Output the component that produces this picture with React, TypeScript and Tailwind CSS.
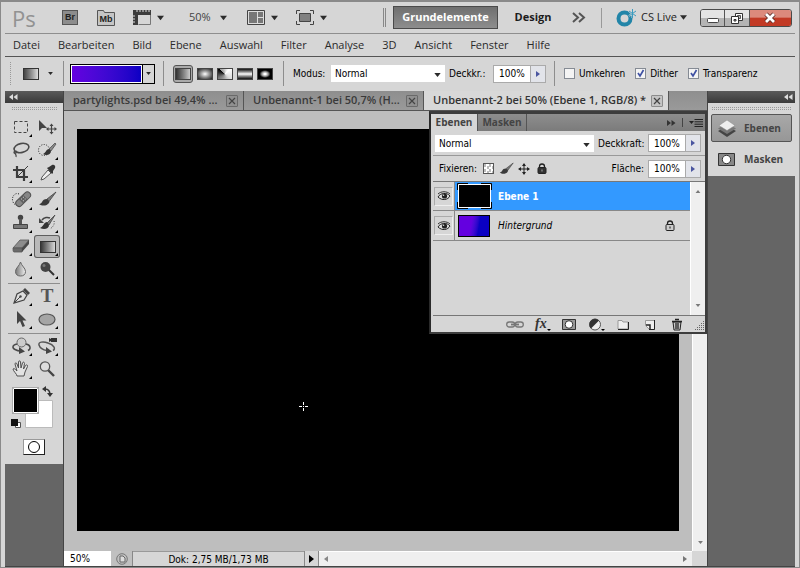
import type { ReactNode } from 'react'
import clsx from 'clsx'

const MENU = ['Datei', 'Bearbeiten', 'Bild', 'Ebene', 'Auswahl', 'Filter', 'Analyse', '3D', 'Ansicht', 'Fenster', 'Hilfe']

const DOCS = [
  { title: 'partylights.psd bei 49,4% ...', width: 'w-[180px]', active: false },
  { title: 'Unbenannt-1 bei 50,7% (H...', width: 'w-[180px]', active: false },
  { title: 'Unbenannt-2 bei 50% (Ebene 1, RGB/8) *', width: 'w-[245px]', active: true },
]

const UI_FONT = "font-['DejaVu_Sans_Condensed','DejaVu_Sans',sans-serif]"

/* ---------- small parts ---------- */

function Down({ className }: { className?: string }) {
  return (
    <svg viewBox="0 0 8 5" className={clsx('shrink-0', className ?? 'h-[5px] w-2')}>
      <path d="M0 0h8L4 5z" fill="#2b2b2b" />
    </svg>
  )
}

function Grip({ className }: { className?: string }) {
  return <div className={clsx('bg-[conic-gradient(#999_25%,transparent_0)] bg-[length:2px_2px]', className)} />
}

function Divider() {
  return <div className="h-[25px] w-px shrink-0 bg-[#8d8d8d]" />
}

function CloseBox({ active }: { active: boolean }) {
  return (
    <button
      type="button"
      aria-label="Schließen"
      className={clsx(
        'flex size-3 shrink-0 items-center justify-center rounded-[1px] border',
        active ? 'border-[#8c8c8c] bg-[#c4c4c4]' : 'border-[#6a6a6a] bg-[#909090]',
      )}
    >
      <svg viewBox="0 0 8 8" className="size-2">
        <path d="M1 1l6 6M7 1l-6 6" stroke="#444" strokeWidth="1.2" />
      </svg>
    </button>
  )
}

function Select({ id, label, value, className }: { id: string; label?: string; value: string; className: string }) {
  return (
    <div className={clsx('relative', className)}>
      <select
        id={id}
        aria-label={label}
        className="block h-[17px] w-full appearance-none bg-white pl-1 text-[10px] text-black outline-none"
      >
        <option>{value}</option>
      </select>
      <Down className="pointer-events-none absolute top-2 right-1 h-1 w-[7px]" />
    </div>
  )
}

function Percent({ id }: { id: string }) {
  return (
    <div className="flex h-[18px] shrink-0 border border-[#aaa] bg-white">
      <input id={id} defaultValue="100%" className="w-9 pl-[5px] text-[10px] text-black outline-none" />
      <button
        type="button"
        aria-label="Regler"
        className="flex w-[15px] items-center justify-center border-l border-[#aaa] bg-[#e2e4ea]"
      >
        <svg viewBox="0 0 4 6" className="h-1.5 w-1">
          <path d="M0 0l4 3-4 3z" fill="#4a56a0" />
        </svg>
      </button>
    </div>
  )
}

function Check({ id, label, checked }: { id: string; label: string; checked?: boolean }) {
  return (
    <div className="flex items-center gap-1">
      <div className="relative size-[11px]">
        <input
          id={id}
          type="checkbox"
          defaultChecked={checked}
          className="peer block size-[11px] appearance-none border border-[#858b94] bg-[#f4f4f4]"
        />
        <svg viewBox="0 0 11 11" className="pointer-events-none absolute inset-0 hidden size-[11px] peer-checked:block">
          <path d="M3 5l2 3 3.500-6" fill="none" stroke="#3f51a3" strokeWidth="1.700" />
        </svg>
      </div>
      <label htmlFor={id}>{label}</label>
    </div>
  )
}

/* ---------- tool icons, drawn on a 26 x 23 cell ---------- */

const BRUSH = (
  <>
    <path d="M22 3l-9 7 2 2.500z" fill="#777" stroke="#444" strokeWidth=".8" />
    <path d="M13 10c-3 0-4 1-5 3-.8 1.500-2 2-3 2 3 2.500 8 2 10-1 .5-1 .5-1.500 0-2z" fill="#3a3a3a" />
  </>
)

const TOOLS: { name: string; icon: ReactNode; flat?: boolean }[][] = [
  [
    { name: 'Auswahlrechteck', icon: <rect x="6.500" y="5.500" width="13" height="11" fill="none" stroke="#444" strokeDasharray="3 2" /> },
    {
      name: 'Verschieben',
      flat: true,
      icon: (
        <>
          <path d="M5 4v11l3-3h5z" fill="#444" />
          <path d="M17.500 9v8M13.500 13h8" stroke="#444" strokeWidth="1.200" />
          <path d="M17.500 7.500l2 2.500h-4zM17.500 18.500l2-2.500h-4zM12 13l2.500-2v4zM23 13l-2.500-2v4z" fill="#444" />
        </>
      ),
    },
    {
      name: 'Lasso',
      icon: (
        <g fill="none" stroke="#4a4a4a" strokeWidth="1.600">
          <ellipse cx="13.500" cy="9" rx="7.500" ry="4.500" transform="rotate(-12 13.500 9)" />
          <path d="M7 12c-2 1-1 3 1 2s0-3-1-1 2 2 1 5" strokeWidth="1.200" />
        </g>
      ),
    },
    {
      name: 'Schnellauswahl',
      icon: (
        <>
          <circle cx="10" cy="11" r="5.500" fill="none" stroke="#222" strokeDasharray="1 1.500" />
          <path d="M21 4l-6 6 2 2 5-7z" fill="#888" stroke="#444" strokeWidth=".7" />
          <path d="M15 10c-3 0-3 4-6 5 3 2 8 1 8-3z" fill="#333" />
        </>
      ),
    },
    {
      name: 'Freistellen',
      icon: (
        <>
          <path d="M9 4v11h11M5 8h11v11" fill="none" stroke="#3c3c3c" strokeWidth="2.200" />
          <path d="M10 14l10-10" stroke="#3c3c3c" />
        </>
      ),
    },
    {
      name: 'Pipette',
      icon: (
        <>
          <path d="M14 8l3 3-7 6-3 1 1-3z" fill="#eee" stroke="#555" />
          <path d="M13 6l2-1 3-2c2-1 4 1 3 3l-2 3v2l-1 1z" fill="#333" />
        </>
      ),
    },
  ],
  [
    {
      name: 'Bereichsreparatur',
      icon: (
        <>
          <path d="M11 5c-4-2-8 3-6 8 1 2 2 3 4 3" fill="none" stroke="#222" strokeDasharray="1 1.500" />
          <g transform="rotate(-44 15 10)">
            <rect x="6" y="7" width="18" height="6.500" rx="3.200" fill="#858585" stroke="#505050" />
            <path d="M12 7v6.500h6V7z" fill="#5d5d5d" />
            <path d="M13.500 9h1M16 9h1M13.500 11.500h1M16 11.500h1" stroke="#ccc" />
          </g>
        </>
      ),
    },
    { name: 'Pinsel', icon: BRUSH },
    {
      name: 'Kopierstempel',
      icon: (
        <>
          <circle cx="12.500" cy="5.500" r="2.700" fill="#444" />
          <path d="M11 7h3v6h-3z" fill="#555" />
          <path d="M5.500 12.500h14v4h-14z" fill="#777" stroke="#444" />
        </>
      ),
    },
    {
      name: 'Protokollpinsel',
      icon: (
        <>
          <path d="M21 3l-8 8 2 2z" fill="#777" stroke="#444" strokeWidth=".8" />
          <path d="M13 10c-3 0-3 4-7 6 4 2 9 1 9-3z" fill="#333" />
          <path d="M8 8c2-3 6-3 8-2" fill="none" stroke="#444" strokeWidth="1.500" />
          <path d="M5 6v5h5z" fill="#444" />
          <path d="M20 9c1 3-1 6-4 8" fill="none" stroke="#444" strokeDasharray="1 1.500" />
        </>
      ),
    },
    {
      name: 'Radiergummi',
      icon: (
        <>
          <path d="M5 13l7-8h9l-7 8z" fill="#8c8c8c" stroke="#555" strokeWidth=".8" />
          <path d="M5 13h9v4H6c-1 0-1-2-1-4z" fill="#6a6a6a" stroke="#555" strokeWidth=".8" />
          <path d="M14 13l7-8v4l-7 8z" fill="#484848" />
        </>
      ),
    },
    { name: 'Verlauf', icon: <rect x="6.500" y="6.500" width="15" height="11" fill="url(#toolGradient)" stroke="#333" /> },
    {
      name: 'Weichzeichner',
      icon: <path d="M12.500 4c1 4 5 6 5 9.500 0 3-2 4.500-5 4.500s-5-1.500-5-4.500c0-3.500 4-5.500 5-9.500z" fill="url(#dropGradient)" stroke="#666" />,
    },
    {
      name: 'Abwedler',
      icon: (
        <>
          <path d="M14 11l6 6" stroke="#333" strokeWidth="2" />
          <circle cx="11.500" cy="9" r="5" fill="#444" />
          <circle cx="10" cy="7.500" r="1.500" fill="#777" />
        </>
      ),
    },
  ],
  [
    {
      name: 'Zeichenstift',
      icon: (
        <>
          <path d="M6 18l3-9 6-3 4 4-3 5z" fill="#ddd" stroke="#444" strokeWidth="1.200" />
          <path d="M15 5l2-2 5 5-2 2z" fill="#444" />
          <path d="M6 18l6-6" stroke="#444" />
          <circle cx="12.500" cy="11.500" r="1.200" fill="#444" />
        </>
      ),
    },
    {
      name: 'Text',
      icon: (
        <text x="13" y="17" textAnchor="middle" fontSize="19" fontWeight="700" fontFamily="Liberation Serif, serif" fill="#555">
          T
        </text>
      ),
    },
    { name: 'Pfadauswahl', icon: <path d="M9 3v13l3-3 2.500 6 2.500-1-2.500-5.500h4z" fill="#444" /> },
    { name: 'Ellipse', icon: <ellipse cx="13" cy="11.500" rx="8" ry="5.500" fill="#a5a5a5" stroke="#555" strokeWidth="1.200" /> },
  ],
  [
    {
      name: '3D drehen',
      icon: (
        <>
          <path d="M9 9c-5 1-5 4-2 5.500s4 1.500 5 1.500M18 9c5 1 5 5 2 6.500" fill="none" stroke="#4a4a4a" strokeWidth="1.500" />
          <path d="M11 12l6 4.500-6 2.500z" fill="#444" />
          <circle cx="13.500" cy="7.500" r="4.500" fill="#ccc" stroke="#666" />
        </>
      ),
    },
    {
      name: '3D-Kamera',
      icon: (
        <>
          <path d="M14 8c-5-2-10-1-9 2s4 5 8 5.500M14 8c6 2 8 6 5 7.500" fill="none" stroke="#555" strokeWidth="1.500" />
          <path d="M12 12l6 4.500-6 2.500z" fill="#444" />
          <path d="M15 3l2 1v-1h6v4h-6v-1l-2 1z" fill="#333" />
        </>
      ),
    },
    {
      name: 'Hand',
      icon: (
        <path
          d="M9 18c0-2-4-5-4-7 1-1 2 0 4 2L7 6c0-1.500 1.500-1.500 2 0l1.500 4V4c0-1.500 2-1.500 2 0l.5 6 1.500-5c.5-1.500 2-1 2 .5l-1 5.500 2-3.500c1-1.200 2.500-.5 2 1L17 14l-1 4z"
          fill="#e2e2e2"
          stroke="#505050"
          strokeLinejoin="round"
        />
      ),
    },
    {
      name: 'Zoom',
      flat: true,
      icon: (
        <>
          <path d="M14 12l6 6" stroke="#444" strokeWidth="2.400" />
          <circle cx="11" cy="8.500" r="4.700" fill="#ddd" stroke="#555" strokeWidth="1.300" />
        </>
      ),
    },
  ],
]

function Toolbar() {
  return (
    <aside className="flex w-[58px] shrink-0 flex-col bg-[#656565]">
      <div className="h-3 bg-linear-to-b from-[#5a5a5a] to-[#3a3a3a] px-1 pt-[3px]">
        <DoubleArrow flip />
      </div>
      <div className="bg-[#d6d6d6] pb-[9px]">
        <Grip className="mx-1.5 mt-1 mb-[5px] h-[3px]" />
        <svg className="block h-0 w-0">
          <defs>
            <linearGradient id="toolGradient">
              <stop stopColor="#333" />
              <stop offset="1" stopColor="#ddd" />
            </linearGradient>
            <linearGradient id="dropGradient">
              <stop stopColor="#777" />
              <stop offset="1" stopColor="#f0f0f0" />
            </linearGradient>
          </defs>
        </svg>
        {TOOLS.map((group, i) => (
          <div key={i} className={clsx('mx-[3px] grid grid-cols-2 py-px', i > 0 && 'mt-px border-t border-[#8e8e8e]')}>
            {group.map((tool) => (
              <button
                key={tool.name}
                type="button"
                aria-label={tool.name}
                className={clsx('h-[23px]', tool.name === 'Verlauf' && 'rounded-[3px] bg-[#b9b9b9] ring-1 ring-[#5e5e5e] ring-inset')}
              >
                <svg viewBox="0 0 26 23" className="h-[23px] w-[26px]">
                  {tool.icon}
                  {!tool.flat && <path d="M24 18v3h-3z" fill="#000" />}
                </svg>
              </button>
            ))}
          </div>
        ))}
        <div className="px-1.5 pt-1">
          <svg viewBox="0 0 46 44" className="h-11 w-[46px]">
            <path d="M14.500 14.500h27v27h-27z" fill="#fff" stroke="#bbb" />
            <path d="M1.500 1.500h26v26h-26z" fill="#000" stroke="#aaa" />
            <path d="M2.500 2.500h24v24h-24z" fill="#000" stroke="#fff" />
            <path d="M4.500 36.500h5v5h-5z" fill="#fff" stroke="#555" />
            <path d="M0 33h7v7H0z" fill="#111" />
            <path d="M34 3c4 0 5 2 5 6" fill="none" stroke="#333" strokeWidth="1.500" />
            <path d="M31 3l4-3v6zM36 7h6l-3 4z" fill="#333" />
          </svg>
        </div>
        <button
          type="button"
          aria-label="Maskierungsmodus"
          className="mx-auto mt-[9px] flex h-4 w-[22px] items-center justify-center border border-t-[#999] border-r-[#222] border-b-[#222] border-l-[#999] bg-white"
        >
          <span className="size-3 rounded-full border border-black" />
        </button>
      </div>
    </aside>
  )
}

function DoubleArrow({ flip, dark }: { flip?: boolean; dark?: boolean }) {
  return (
    <svg viewBox="0 0 9 6" className="block h-1.5 w-[9px]">
      <path d={flip ? 'M4 0v6L0 3zM8.500 0v6l-4-3z' : 'M0 0l4 3-4 3zM4.500 0l4 3-4 3z'} fill={dark ? '#333' : '#ddd'} />
    </svg>
  )
}

/* ---------- top bars ---------- */

function AppBar() {
  return (
    <header className="flex h-8 items-center border-b border-[#8e8e8e] pr-[3px] pl-[7px]">
      <span className="w-[50px] font-['Open_Sans',sans-serif] text-[22px] leading-none text-[#929292]">Ps</span>
      <div className="flex flex-1 items-center text-[#444]">
        <button type="button" className="h-[15px] w-4 border border-[#555] bg-[#8c8c8c] font-['Liberation_Sans',sans-serif] text-[9px] leading-none font-bold text-[#222]">
          Br
        </button>
        <button type="button" aria-label="Mb" className="ml-[19px]">
          <svg viewBox="0 0 18 16" className="block h-4 w-[18px]">
            <path d="M.5.500h6l1 2h10v13H.5z" fill="#c5c5c5" stroke="#555" />
            <text x="9" y="12" textAnchor="middle" fontSize="9" fontWeight="700" fontFamily="Liberation Sans, sans-serif" fill="#222">
              Mb
            </text>
          </svg>
        </button>
        <button type="button" aria-label="Extras" className="ml-[18px] flex items-center gap-1.5">
          <svg viewBox="0 0 18 15" className="h-[15px] w-[18px]">
            <path d="M0 0h18v5H5v10H0z" fill="#3c3c3c" />
            <path d="M4 0v2M7 0v2M10 0v2M13 0v2M16 0v2M0 6h2M0 9h2M0 12h2" stroke="#ddd" />
            <path d="M5.500 14.500h12V5" fill="none" stroke="#777" />
          </svg>
          <Down className="h-1.5 w-[7px]" />
        </button>
        <button type="button" className="ml-[25px] flex items-center gap-[9px] font-['Open_Sans',sans-serif] text-[11px]">
          50%
          <Down className="h-1.5 w-[7px]" />
        </button>
        <button type="button" aria-label="Dokumente anordnen" className="ml-5 flex items-center gap-1.5">
          <svg viewBox="0 0 18 15" className="h-[15px] w-[18px]">
            <path d="M.5.500h17v14H.5z" fill="#ddd" stroke="#444" />
            <path d="M2 2h8v11H2zM11 2h5v5h-5zM11 8h5v5h-5z" fill="#777" />
          </svg>
          <Down className="h-1.5 w-[7px]" />
        </button>
        <button type="button" aria-label="Bildschirmmodus" className="ml-[18px] flex items-center gap-1.5">
          <svg viewBox="0 0 18 15" className="h-[15px] w-[18px]">
            <path d="M.5 4V.5H4M14 .5h3.500V4M17.500 11v3.500H14M4 14.500H.5V11" fill="none" stroke="#444" />
            <path d="M3.500 3.500h11v8h-11z" fill="#808080" stroke="#444" />
          </svg>
          <Down className="h-1.5 w-[7px]" />
        </button>
      </div>
      <div className="flex items-center font-['Open_Sans',sans-serif] text-[11px] text-[#1c1c1c]">
        <div className="h-[19px] w-[3px] border-x border-[#888]" />
        <button type="button" className="ml-[7px] h-[23px] w-[105px] border border-[#4a4a4a] bg-linear-to-b from-[#6f6f6f] to-[#8e8e8e] font-bold text-white">
          Grundelemente
        </button>
        <button type="button" className="ml-4 w-[38px] font-bold">
          Design
        </button>
        <button type="button" aria-label="Mehr" className="ml-5">
          <svg viewBox="0 0 14 11" className="block h-[11px] w-[14px]">
            <path d="M1 1l5 4.500L1 10M7 1l5 4.500L7 10" fill="none" stroke="#555" strokeWidth="2" />
          </svg>
        </button>
        <div className="ml-[15px] h-5 w-px bg-[#999]" />
        <button type="button" className="ml-3.5 flex items-center">
          <svg viewBox="0 0 21 18" className="mr-1 h-[18px] w-[21px]">
            <circle cx="8.500" cy="9.500" r="6" fill="none" stroke="#2285a8" strokeWidth="4" />
            <path d="M16.500 0v9M13 2l7 5M20 2l-7 5" stroke="#d6d6d6" strokeWidth="2" />
            <path d="M16.500 0v9M13 2l7 5M20 2l-7 5" stroke="#3c9cc0" />
          </svg>
          CS Live
          <Down className="ml-[3px] h-[5px] w-[7px]" />
        </button>
        <div className="ml-[13px] flex h-[18px] overflow-hidden rounded-[3px] border border-[#4a4a4a]">
          <button type="button" aria-label="Minimieren" className="w-6 border-r border-[#555] bg-linear-to-b from-[#e4e4e4] from-50% to-[#b4b4b4] to-50%">
            <svg viewBox="0 0 24 16" className="h-4 w-6">
              <rect x="6.500" y="8.500" width="11" height="4" rx="1" fill="#fff" stroke="#444" />
            </svg>
          </button>
          <button type="button" aria-label="Verkleinern" className="w-[25px] border-r border-[#555] bg-linear-to-b from-[#e4e4e4] from-50% to-[#b4b4b4] to-50%">
            <svg viewBox="0 0 24 16" className="h-4 w-6">
              <path d="M10.500 3.500h7v7h-7z" fill="#fff" stroke="#333" />
              <path d="M12.500 5.500h3v3h-3z" fill="#bbb" stroke="#333" strokeWidth=".8" />
              <path d="M6.500 6.500h7v7h-7z" fill="#fff" stroke="#333" />
              <path d="M9 9.500h2v1.500H9z" fill="#bbb" stroke="#333" />
            </svg>
          </button>
          <button type="button" aria-label="Schließen" className="w-[41px] bg-linear-to-b from-[#dc8a7c] from-45% to-[#c23a25] to-50%">
            <svg viewBox="0 0 41 16" className="h-4 w-[41px]">
              <path d="M16 4l8 8M24 4l-8 8" stroke="#5b2a25" strokeWidth="4.500" />
              <path d="M16 4l8 8M24 4l-8 8" stroke="#fff" strokeWidth="2.800" />
            </svg>
          </button>
        </div>
      </div>
    </header>
  )
}

const GRADIENT_TYPES = [
  { name: 'Linear', bg: 'bg-linear-to-r from-[#333] to-[#ccc]' },
  { name: 'Radial', bg: 'bg-radial from-white to-[#222]' },
  { name: 'Winkel', bg: 'bg-[conic-gradient(from_-50deg,#999,#fff_25%,#ddd_50%,#777_80%,#000)]' },
  { name: 'Reflektiert', bg: 'bg-linear-to-b from-[#111] via-white to-[#111]' },
  { name: 'Raute', bg: 'bg-radial from-white from-10% via-[#888] via-35% to-black to-60%' },
]

function OptionsBar() {
  return (
    <div className="flex h-[34px] items-center pb-px pl-1 text-[10px] whitespace-nowrap text-black">
      <Grip className="h-6 w-[3px]" />
      <button type="button" aria-label="Verlaufswerkzeug" className="ml-[11px] flex items-center gap-[9px]">
        <span className="h-3 w-4 border border-[#333] bg-linear-to-r from-[#444] to-[#ddd]" />
        <Down className="h-[3px] w-[5px]" />
      </button>
      <div className="ml-2.5 flex">
        <Divider />
      </div>
      <button type="button" aria-label="Verlauf bearbeiten" className="ml-1.5 flex h-5 w-[85px] border border-black bg-[#d6d6d6]">
        <span className="h-full flex-1 border border-white bg-linear-to-r from-[#6400e0] to-[#0a00c4]" />
        <span className="flex h-full w-3 items-center justify-center border-l border-black">
          <Down className="h-[3px] w-[5px]" />
        </span>
      </button>
      <div className="mr-[9px] ml-2 flex">
        <Divider />
      </div>
      <div className="flex items-center gap-1">
        {GRADIENT_TYPES.map((type, i) => (
          <button
            key={type.name}
            type="button"
            aria-label={type.name}
            className={clsx('flex items-center', i === 0 && 'rounded-[3px] border border-[#555] bg-[#aaa] px-px py-0.5')}
          >
            <span className={clsx('h-3 w-4 border border-[#444]', type.bg)} />
          </button>
        ))}
      </div>
      <div className="mr-[9px] ml-2.5 flex">
        <Divider />
      </div>
      <label htmlFor="mode" className="w-[38px]">
        Modus:
      </label>
      <Select id="mode" value="Normal" className="w-[114px]" />
      <label htmlFor="opacity" className="ml-1 w-11">
        Deckkr.:
      </label>
      <Percent id="opacity" />
      <div className="mr-[9px] ml-2 flex">
        <Divider />
      </div>
      <div className="flex items-center gap-2.5">
        <Check id="reverse" label="Umkehren" />
        <Check id="dither" label="Dither" checked />
        <Check id="transparency" label="Transparenz" checked />
      </div>
    </div>
  )
}

/* ---------- layers panel ---------- */

function Eye() {
  return (
    <span className="flex size-[19px] items-center justify-center border border-t-[#aaa] border-r-[#eee] border-b-[#eee] border-l-[#aaa]">
      <svg viewBox="0 0 14 10" className="h-2.5 w-3.5">
        <path d="M1 6c2-4 9-5 12-1-2 4-8 5-12 1z" fill="#ddd" stroke="#222" />
        <path d="M1 3c3-3 9-3 12 0" fill="none" stroke="#333" />
        <circle cx="7.500" cy="5" r="2.600" fill="#222" />
        <circle cx="6.500" cy="4.200" r=".8" fill="#ddd" />
      </svg>
    </span>
  )
}

function Lock({ solid }: { solid?: boolean }) {
  return (
    <svg viewBox="0 0 10 11" className="h-[11px] w-2.5">
      <path d="M2.500 5V3.500a2.500 2.500 0 0 1 5 0V5" fill="none" stroke="#222" strokeWidth="1.300" />
      <rect x="1" y="4.500" width="8" height="6" rx="1" fill={solid ? '#333' : '#ccc'} stroke="#222" />
      <path d="M5 6.500v2" stroke={solid ? '#999' : '#333'} strokeWidth="1.200" />
    </svg>
  )
}

const FOOTER_ICONS: { name: string; icon: ReactNode }[] = [
  {
    name: 'Ebenen verbinden',
    icon: (
      <g fill="none" stroke="#777" strokeWidth="1.300">
        <rect x=".7" y="5" width="8" height="5" rx="2.500" />
        <rect x="9.300" y="5" width="8" height="5" rx="2.500" />
        <path d="M5 7.500h8" strokeWidth="1.800" />
      </g>
    ),
  },
  {
    name: 'Ebenenstil',
    icon: (
      <>
        <text x="2" y="11" fontSize="14" fontWeight="700" fontStyle="italic" fontFamily="Liberation Serif, serif" fill="#333">
          fx
        </text>
        <path d="M14 12h4l-2 2z" fill="#000" />
      </>
    ),
  },
  {
    name: 'Ebenenmaske',
    icon: (
      <>
        <path d="M2.500 2.500h13v10h-13z" fill="#999" stroke="#333" />
        <circle cx="9" cy="7.500" r="3.800" fill="#fff" stroke="#333" />
      </>
    ),
  },
  {
    name: 'Einstellungsebene',
    icon: (
      <>
        <circle cx="8" cy="7.500" r="5.500" fill="#eee" stroke="#555" />
        <path d="M4 11.500A5.500 5.500 0 0 1 12 3.500z" fill="#333" />
        <path d="M14 12h4l-2 2z" fill="#000" />
      </>
    ),
  },
  {
    name: 'Neue Gruppe',
    icon: (
      <>
        <path d="M4 3.500h4l1 1.500h5v7H4z" fill="#eee" stroke="#999" />
        <path d="M4 12.500h10.500V5" fill="none" stroke="#222" />
      </>
    ),
  },
  {
    name: 'Neue Ebene',
    icon: (
      <>
        <path d="M4.500 3.500h9v9h-5l-4-4z" fill="#eee" stroke="#999" />
        <path d="M13.500 3v9.500H8" fill="none" stroke="#222" />
        <path d="M5 8h4v4" fill="none" stroke="#222" strokeWidth="1.500" />
      </>
    ),
  },
  {
    name: 'Löschen',
    icon: (
      <>
        <path d="M5 5h8l-1 8H6z" fill="#ccc" stroke="#222" />
        <path d="M4 4.500h10M7 2.500h4M8 6v6M10 6v6" stroke="#222" strokeWidth="1.300" />
      </>
    ),
  },
]

function LayersPanel() {
  return (
    <section className="absolute top-5 right-0 flex h-[223px] w-[278px] flex-col border-2 border-t-[3px] border-[#3d3d3d] border-l-[#2a2a2a] bg-[#d6d6d6] text-[10px] text-black">
      <div className="flex h-[17px] shrink-0 items-center bg-linear-to-b from-[#8e8e8e] to-[#7b7b7b] font-['Open_Sans',sans-serif] font-bold">
        <button type="button" className="h-full w-[46px] bg-[#d6d6d6] text-[#444]">
          Ebenen
        </button>
        <button type="button" className="h-full w-[50px] border-x border-[#555] text-[#444]">
          Masken
        </button>
        <button type="button" aria-label="Reduzieren" className="mr-1.5 ml-auto">
          <DoubleArrow dark />
        </button>
        <div className="h-[9px] w-px bg-[#444]" />
        <button type="button" aria-label="Bedienfeldmenü" className="mr-0.5 ml-1.5">
          <svg viewBox="0 0 14 8" className="block h-2 w-3.5">
            <path d="M0 2h5L2.500 5z" fill="#222" />
            <path d="M5.500.5H14M5.500 2.800H14M5.500 5.200H14M5.500 7.500H14" stroke="#222" />
          </svg>
        </button>
      </div>
      <div className="ml-0.5 flex h-[25px] shrink-0 items-center border-b border-[#999] pr-1 pl-0.5">
        <Select id="blend" label="Füllmethode" value="Normal" className="flex-1" />
        <label htmlFor="layer-opacity" className="w-[54px] pl-1">
          Deckkraft:
        </label>
        <Percent id="layer-opacity" />
      </div>
      <div className="ml-0.5 flex h-[26px] shrink-0 items-center border-b border-[#777] pr-1 pl-1.5">
        <span className="w-11">Fixieren:</span>
        <button type="button" aria-label="Transparente Pixel" className="size-[11px] border border-[#555] bg-[conic-gradient(#fff_25%,#bbb_0_50%,#fff_0_75%,#bbb_0)] bg-[length:5px_5px]" />
        <button type="button" aria-label="Bildpixel" className="ml-[5px]">
          <svg viewBox="4 2 19 16" className="block h-[13px] w-[15px]">
            {BRUSH}
          </svg>
        </button>
        <button type="button" aria-label="Position" className="ml-1">
          <svg viewBox="0 0 12 12" className="block size-3">
            <path d="M6 1v10M1 6h10" stroke="#222" />
            <path d="M6 0l2 3H4zM6 12l2-3H4zM0 6l3-2v4zM12 6L9 4v4z" fill="#222" />
          </svg>
        </button>
        <button type="button" aria-label="Alle fixieren" className="ml-[7px]">
          <Lock solid />
        </button>
        <label htmlFor="fill" className="mr-1 ml-auto">
          Fläche:
        </label>
        <Percent id="fill" />
      </div>
      <div className="ml-0.5 flex flex-1 border-b border-[#777]">
        <div className="flex-1">
          <div className="flex h-[29px] items-stretch border-b border-[#888]">
            <button type="button" aria-label="Ebene 1 anzeigen" className="flex w-[22px] items-center justify-center border-r border-[#888]">
              <Eye />
            </button>
            <div className="flex flex-1 items-center bg-[#3399ff] pl-0.5">
              <svg viewBox="0 0 35 26" className="h-[26px] w-[35px]">
                <path d="M.5 7V.5H11M24 .5h10.500V7M34.500 19v6.500H24M11 25.500H.5V19" fill="none" stroke="#000" />
                <path d="M1.500 1.500h32v23h-32z" fill="#000" stroke="#fff" />
              </svg>
              <span className="pl-1.5 font-bold text-white">Ebene 1</span>
            </div>
          </div>
          <div className="flex h-[30px] items-stretch border-b border-[#888]">
            <button type="button" aria-label="Hintergrund anzeigen" className="flex w-[22px] items-center justify-center border-r border-[#888]">
              <Eye />
            </button>
            <div className="flex flex-1 items-center pr-[15px] pl-[3px]">
              <div className="h-[22px] w-8 border border-black bg-linear-100 from-[#6400e0] from-40% to-[#0a00c4] to-65%" />
              <span className="flex-1 pl-2 italic">Hintergrund</span>
              <Lock />
            </div>
          </div>
        </div>
        <div className="flex w-[15px] flex-col items-center justify-between border-l border-white bg-[#efefef] py-2">
          <Down className="h-[3px] w-1.5 rotate-180 opacity-60" />
          <Down className="h-[3px] w-1.5 opacity-60" />
        </div>
      </div>
      <div className="flex h-4 shrink-0 items-center justify-end gap-[9px]">
        {FOOTER_ICONS.map((item) => (
          <button key={item.name} type="button" aria-label={item.name}>
            <svg viewBox="0 0 18 15" className="block h-[15px] w-[18px]">
              {item.icon}
            </svg>
          </button>
        ))}
        <svg viewBox="0 0 10 10" className="mt-1 size-2.5">
          <path d="M8.500 0v10M6.500 2v8M4.500 4v6M2.500 6v4M.5 8v2" stroke="#666" strokeDasharray="1 1" />
        </svg>
      </div>
    </section>
  )
}

/* ---------- document area ---------- */

function Workspace() {
  return (
    <main className="relative flex min-w-0 flex-1 flex-col border-x border-[#444] bg-[#bebebe]">
      <div className="flex h-5 shrink-0 border-b border-[#555] bg-linear-to-b from-[#8e8e8e] to-[#9a9a9a]">
        {DOCS.map((doc) => (
          <div
            key={doc.title}
            className={clsx(
              'flex items-center justify-between border-r border-[#555] pr-[5px] pl-[9px]',
              doc.width,
              doc.active && 'bg-[#d8d8d8]',
            )}
          >
            <button
              type="button"
              className={clsx(
                "font-['Open_Sans',sans-serif] text-[11px] font-semibold whitespace-nowrap",
                doc.active ? 'text-[#333]' : 'text-[#3a3a3a]',
              )}
            >
              {doc.title}
            </button>
            <CloseBox active={doc.active} />
          </div>
        ))}
      </div>
      <div className="flex flex-1">
        <div className="flex flex-1 pt-[18px] pr-[13px] pb-5 pl-[13px]">
          <div className="flex flex-1 bg-black">
            <svg viewBox="0 0 9 9" className="mt-[273px] ml-[222px] size-[9px]">
              <path d="M4.500 0v3M4.500 6v3M0 4.500h3M6 4.500h3M4 4.500h1" stroke="#fff" />
            </svg>
          </div>
        </div>
        <div className="flex w-[15px] flex-col items-center justify-end border-l border-white bg-[#efefef] pb-[7px]">
          <Down className="h-[3px] w-[7px] opacity-60" />
        </div>
      </div>
      <div className="flex h-[15px] shrink-0 bg-[#d6d6d6] text-[10px] text-black">
        <input aria-label="Zoomstufe" defaultValue="50%" className="w-[47px] bg-white pl-1.5 outline-none" />
        <button type="button" aria-label="Status" className="flex w-[22px] items-center justify-center border-r border-[#888] bg-[#c0c0c0]">
          <svg viewBox="0 0 12 12" className="size-3">
            <circle cx="6" cy="6" r="5.300" fill="none" stroke="#777" />
            <path d="M4 3h3l2 2v4H4z" fill="#ddd" stroke="#666" />
          </svg>
        </button>
        <div className="w-[171px] border-t border-[#999] text-center leading-[15px]">Dok: 2,75 MB/1,73 MB</div>
        <button type="button" aria-label="Statusmenü" className="flex w-[15px] items-center justify-center border-x border-[#888]">
          <svg viewBox="0 0 5 8" className="h-2 w-[5px]">
            <path d="M0 0l5 4-5 4z" />
          </svg>
        </button>
        <div className="flex flex-1 items-center justify-between border-t border-white bg-[#efefef] px-[5px]">
          <svg viewBox="0 0 4 6" className="h-1.5 w-1">
            <path d="M4 0v6L0 3z" fill="#888" />
          </svg>
          <svg viewBox="0 0 4 6" className="h-1.5 w-1">
            <path d="M0 0v6l4-3z" fill="#777" />
          </svg>
        </div>
        <div className="w-[15px]" />
      </div>
      <LayersPanel />
    </main>
  )
}

function Dock() {
  return (
    <aside className="flex w-[87px] shrink-0 flex-col bg-[#656565]">
      <div className="flex h-3 justify-end bg-linear-to-b from-[#5a5a5a] to-[#3a3a3a] px-0.5 pt-[3px]">
        <DoubleArrow flip />
      </div>
      <div className="bg-[#d6d6d6] px-[3px] pb-px font-['Open_Sans',sans-serif] text-[10px] font-bold text-[#444]">
        <Grip className="my-1 h-[3px]" />
        <button type="button" className="flex h-7 w-full items-center gap-2 rounded-[2px] border border-[#555] bg-linear-to-b from-[#a8a8a8] to-[#979797] pl-1.5">
          <svg viewBox="0 0 18 17" className="h-[17px] w-[18px]">
            <path d="M0 11l9-5 9 5-9 6z" fill="#444" />
            <path d="M0 8.500l9-5 9 5-9 5.500z" fill="#777" />
            <path d="M1 5.500L9 0l8 5.500-8 5z" fill="#eee" stroke="#888" strokeWidth=".5" />
          </svg>
          Ebenen
        </button>
        <button type="button" className="mt-0.5 flex h-[31px] w-full items-center gap-2 pl-[7px]">
          <svg viewBox="0 0 18 13" className="h-[13px] w-[18px]">
            <path d="M.5.500h16v12H.5z" fill="#888" stroke="#333" />
            <circle cx="8.500" cy="6.500" r="4.200" fill="#fff" stroke="#333" />
          </svg>
          Masken
        </button>
      </div>
    </aside>
  )
}

export default function App() {
  return (
    <div className={clsx('flex min-h-screen flex-col border border-t-2 border-[#8a8a8a] bg-[#d6d6d6] px-1', UI_FONT)}>
      <AppBar />
      <nav className="flex h-[23px] items-center gap-[18px] border-b border-[#555] pl-2 font-['Open_Sans',sans-serif] text-[11px] text-[#2a2a2a]">
        {MENU.map((item) => (
          <button key={item} type="button">
            {item}
          </button>
        ))}
      </nav>
      <OptionsBar />
      <div className="flex flex-1 border-b border-[#444]">
        <Toolbar />
        <Workspace />
        <Dock />
      </div>
    </div>
  )
}
